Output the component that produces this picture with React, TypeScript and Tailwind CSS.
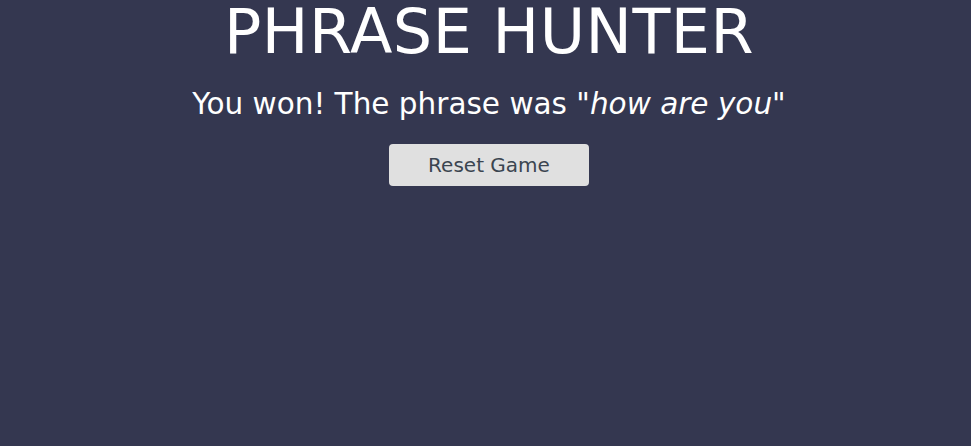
export default function App() {
  return (
    <div className="min-h-[446px] w-full bg-[#343750] pl-[7px] text-center font-['DejaVu_Sans',sans-serif] text-white">
      <h1 className="text-[62px] leading-[64px] font-normal tracking-[0.5px]">PHRASE HUNTER</h1>
      <h2 className="mt-[20px] text-[29.5px] leading-[40px]">
        You won! The phrase was <em className="italic">"how are you</em>"
      </h2>
      <button className="mt-[20px] h-[42px] w-[200px] rounded-[4px] bg-[#e0e0e0] text-[20px] text-[#3b4550]">
        Reset Game
      </button>
    </div>
  );
}
